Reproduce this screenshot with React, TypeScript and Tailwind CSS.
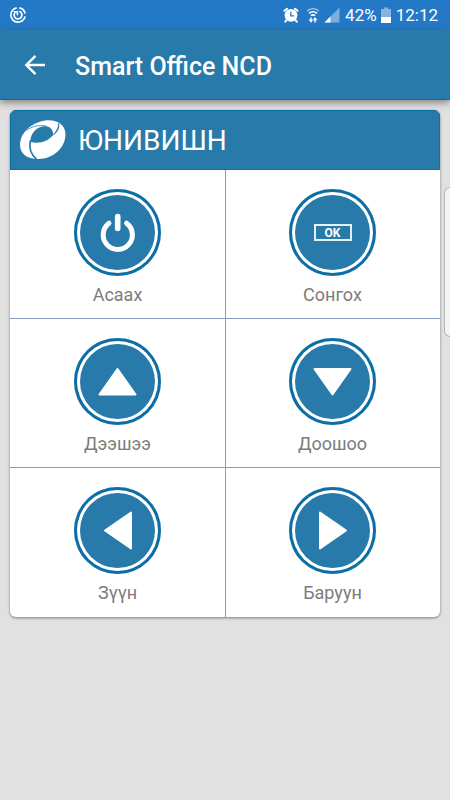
import type { ReactNode } from 'react';

interface RemoteKey {
  id: string;
  label: string;
  icon: ReactNode;
}

function Triangle({ points }: { points: string }) {
  return (
    <svg viewBox="0 0 87 87" className="size-full" fill="#fff" stroke="#fff" strokeWidth="2" strokeLinejoin="round" aria-hidden="true">
      <polygon points={points} />
    </svg>
  );
}

function PowerIcon() {
  return (
    <svg viewBox="0 0 87 87" className="size-full" fill="none" stroke="#fff" strokeWidth="5" strokeLinecap="round" aria-hidden="true">
      <path d="M43.7 27.5v12" strokeWidth="5.6" />
      <path d="M35 34.2a14.6 14.6 0 1 0 17.6 0" />
    </svg>
  );
}

function OkIcon() {
  return (
    <span className="flex h-[17px] w-[38px] items-center justify-center border-2 border-[#e4f1f8] text-xs leading-none font-bold text-white">
      OK
    </span>
  );
}

const KEYS: RemoteKey[] = [
  { id: 'power', label: 'Асаах', icon: <PowerIcon /> },
  { id: 'ok', label: 'Сонгох', icon: <OkIcon /> },
  { id: 'up', label: 'Дээшээ', icon: <Triangle points="43.5,31 61.5,56.5 25.5,56.5" /> },
  { id: 'down', label: 'Доошоо', icon: <Triangle points="25.5,31 61.5,31 43.5,56.5" /> },
  { id: 'left', label: 'Зүүн', icon: <Triangle points="31,43.5 57,25.5 57,61.5" /> },
  { id: 'right', label: 'Баруун', icon: <Triangle points="31,25.5 57,43.5 31,61.5" /> },
];

function StatusBar() {
  return (
    <div className="flex h-[30px] items-center bg-[#2479c6] px-[10px] text-white">
      <svg viewBox="0 0 16 16" className="size-4" fill="none" stroke="#fff" aria-hidden="true">
        <path d="M9.3.9A7.2 7.2 0 0 1 15.1 6.7M15.1 9.3A7.2 7.2 0 1 1 6.7.9" strokeWidth="1.6" />
        <path d="M9.3 4.3a3.9 3.9 0 1 1-4 .9" strokeWidth="1.7" />
        <path d="M3.8 4.7h3.6v3.6" strokeWidth="1.5" />
      </svg>

      <div className="ml-auto flex items-center">
        <svg viewBox="0 0 16 16" className="size-4" aria-hidden="true">
          <circle cx="8" cy="8.3" r="6.4" fill="#fff" />
          <path d="M1.5 3.8L4 1.7M14.5 3.8L12 1.7M3.5 13.2l-1.2 1.5M12.5 13.2l1.2 1.5" stroke="#fff" strokeWidth="2" strokeLinecap="round" />
          <path d="M7.8 4.8v4h3.2" fill="none" stroke="#2479c6" strokeWidth="1.3" />
        </svg>
        <svg viewBox="0 0 14 16" className="ml-[7px] h-4 w-[14px]" fill="none" stroke="#fff" aria-hidden="true">
          <path d="M1.2 4a8.2 8.2 0 0 1 11.6 0" strokeWidth="1.4" opacity=".6" />
          <path d="M3 6.4a5.6 5.6 0 0 1 8 0M5 8.7a2.8 2.8 0 0 1 4 0" strokeWidth="1.6" />
          <path d="M5 10.5v3M9 15.5v-3" strokeWidth="1.5" />
          <path d="M2.5 12.6h5L5 15.8zM6.5 13.2h5L9 10z" fill="#fff" stroke="none" />
        </svg>
        <svg viewBox="0 0 16 16" className="ml-1 size-4" fill="#fff" aria-hidden="true">
          <path d="M15.5.5v15H.5z" opacity=".4" />
          <path d="M6.500 9.500v6h-6z" />
        </svg>
        <span className="ml-[5px] text-[17px] leading-5">42%</span>
        <svg viewBox="0 0 10 16" className="ml-1 h-4 w-[10px]" fill="#fff" aria-hidden="true">
          <path d="M3 .5h4V2h3v14H0V2h3z" opacity=".45" />
          <path d="M0 10h10v6H0z" />
        </svg>
        <span className="mr-[2px] ml-[5px] text-[17px] leading-5">12:12</span>
      </div>
    </div>
  );
}

function AppBar() {
  return (
    <header className="relative flex h-[70px] items-center border-b border-[#096b9e] bg-[#277aa9] pl-[23px] shadow-[0_3px_7px_rgba(60,45,35,0.5)]">
      <button type="button" aria-label="Back" className="size-6">
        <svg viewBox="0 0 24 24" className="size-6" fill="none" stroke="#fff" strokeWidth="2.4" aria-hidden="true">
          <path d="M22 12H4M12.5 2.8L3.3 12l9.2 9.2" />
        </svg>
      </button>
      <h1 className="ml-7 pt-1 text-[25px] leading-8 font-medium text-white">Smart Office NCD</h1>
    </header>
  );
}

function BrandLogo() {
  return (
    <svg viewBox="0 0 46 40" className="h-10 w-[46px]" aria-hidden="true">
      <path d="M0 24.5C0 11 15 .2 29 .2 38 .2 45 5 45.5 14 45.5 28 33 39 18 39 7 39 0 34 0 24.5z" fill="#fff" />
      <path d="M10.2 21.8C10.5 13 17 6.3 25 6.3c5 0 8 3 8.2 8.4C28.5 21 19.5 24.5 10.2 21.8z" fill="#277aa9" />
      <path d="M32.8 15.2c3-2.7 5.6-7.2 6-12.200.9 5-1.300 9.500-6 12.200z" fill="#277aa9" stroke="#277aa9" strokeWidth=".6" />
      <path d="M10.3 20.5c-1.6 7.5.8 14 6.2 18.7" fill="none" stroke="#277aa9" strokeWidth="1.7" />
      <path d="M6.5 10.5C12 6 19.5 4.6 27 6.3" fill="none" stroke="#277aa9" strokeWidth=".8" />
    </svg>
  );
}

function KeyCell({ item }: { item: RemoteKey }) {
  return (
    <button
      type="button"
      className="flex h-[149px] flex-col items-center border-[#849fbb] pt-[19px] even:border-l even:pr-px not-nth-last-[-n+2]:border-b"
    >
      <span className="flex size-[87px] items-center justify-center rounded-full bg-[#277aa9] shadow-[inset_0_0_0_3px_#0b6fa5,inset_0_0_0_6px_#fff]">
        {item.icon}
      </span>
      <span className="mt-[7px] text-lg leading-6 text-[#7c7c7c]">{item.label}</span>
    </button>
  );
}

export default function App() {
  return (
    <div className="relative min-h-screen bg-[#e1e1e1] font-[Roboto,sans-serif]">
      <StatusBar />
      <AppBar />

      <main className="p-[10px]">
        <section className="overflow-hidden rounded-md bg-white shadow-[0_1px_3px_rgba(0,0,0,0.45)]">
          <div className="flex h-[60px] items-center border border-[#096fa4] bg-[#277aa9] pl-[9px]">
            <BrandLogo />
            <h2 className="ml-3 pt-[2px] text-[28px] leading-9 text-white">ЮНИВИШН</h2>
          </div>
          <div className="grid grid-cols-2">
            {KEYS.map(item => (
              <KeyCell key={item.id} item={item} />
            ))}
          </div>
        </section>
      </main>

      {/* Edge panel handle */}
      <div className="absolute top-[187px] right-0 h-[150px] w-[6px] rounded-l-md border border-r-0 border-[#b5b5b5] bg-[#f4f4f4]" />
    </div>
  );
}
